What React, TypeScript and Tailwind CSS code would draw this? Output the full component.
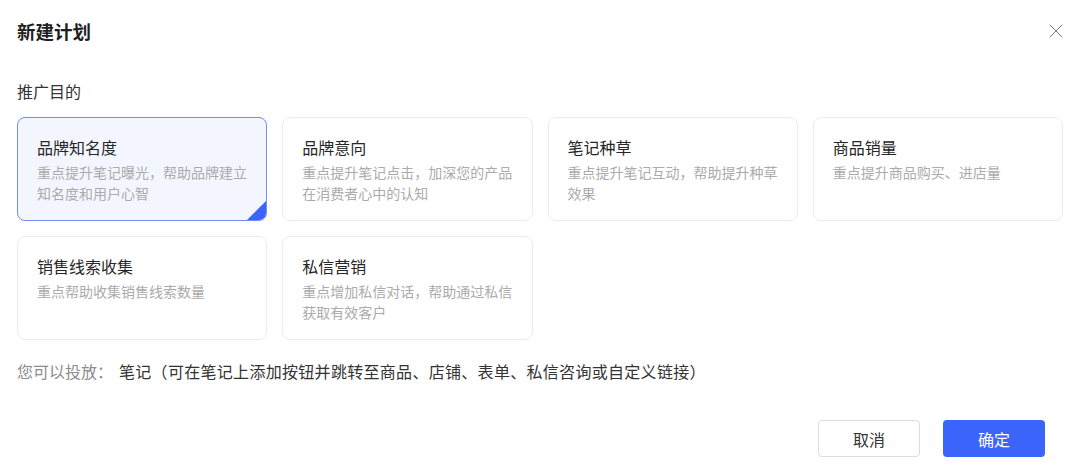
import { X } from 'lucide-react';

type Goal = { title: string; desc: string };

const GOALS: Goal[] = [
  { title: '品牌知名度', desc: '重点提升笔记曝光，帮助品牌建立知名度和用户心智' },
  { title: '品牌意向', desc: '重点提升笔记点击，加深您的产品在消费者心中的认知' },
  { title: '笔记种草', desc: '重点提升笔记互动，帮助提升种草效果' },
  { title: '商品销量', desc: '重点提升商品购买、进店量' },
  { title: '销售线索收集', desc: '重点帮助收集销售线索数量' },
  { title: '私信营销', desc: '重点增加私信对话，帮助通过私信获取有效客户' },
];

const GoalCard = ({ goal, selected }: { goal: Goal; selected: boolean }) => (
  <div
    className={
      'relative h-[104px] overflow-hidden rounded-lg border px-[19px] pt-[18px] ' +
      (selected ? 'border-[#6f8ef8] bg-[#f3f6fe]' : 'border-[#ececec] bg-white')
    }
  >
    <p className="text-[16px] leading-[22px] text-[#262626]">{goal.title}</p>
    <p className="mt-1 text-[14px] leading-[21px] text-[#ababab]">{goal.desc}</p>
    {selected && (
      <svg className="absolute bottom-0 right-0 h-[19px] w-[19px]" viewBox="0 0 19 19">
        <polygon points="19,0 19,19 0,19" fill="#3b64fb" />
      </svg>
    )}
  </div>
);

export default function App() {
  return (
    <div
      className="h-[470px] w-[1080px] bg-white px-[17px]"
      style={{ fontFamily: '"Noto Sans CJK SC", "Noto Sans", sans-serif' }}
    >
      <div className="flex h-[42px] items-center justify-between pt-[20px]">
        <h1 className="text-[18.5px] font-bold leading-[22px] text-[#1f1f1f]">新建计划</h1>
        <X className="-mr-[5px] h-[24px] w-[24px] text-[#7a7a7a]" strokeWidth={1} />
      </div>

      <p className="mt-[37px] text-[16px] leading-[24px] text-[#333]">推广目的</p>

      <div className="mt-[14px] grid grid-cols-4 gap-[15px]">
        {GOALS.map((goal, i) => (
          <GoalCard key={goal.title} goal={goal} selected={i === 0} />
        ))}
      </div>

      <p className="mt-[19px] text-[16px] leading-[24px]">
        <span className="text-[#8c8c8c]">您可以投放：</span>
        <span className="ml-[6px] tracking-[0.3px] text-[#333]">
          笔记（可在笔记上添加按钮并跳转至商品、店铺、表单、私信咨询或自定义链接）
        </span>
      </p>

      <div className="mr-[18px] mt-[37px] flex justify-end gap-[23px]">
        <button className="h-[37px] w-[102px] rounded border border-[#dcdcdc] bg-white text-[16px] text-[#333]">
          取消
        </button>
        <button className="h-[37px] w-[102px] rounded bg-[#3b64fb] text-[16px] text-white">
          确定
        </button>
      </div>
    </div>
  );
}
